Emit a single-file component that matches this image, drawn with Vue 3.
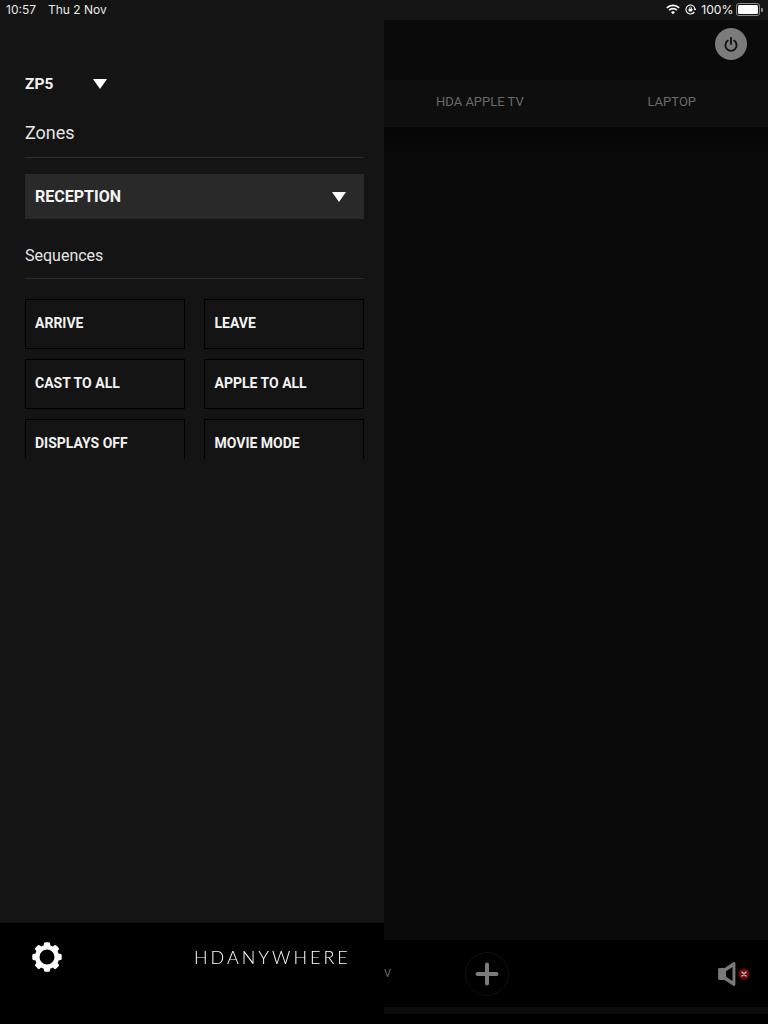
<script setup>
const sequences = ['ARRIVE', 'LEAVE', 'CAST TO ALL', 'APPLE TO ALL', 'DISPLAYS OFF', 'MOVIE MODE']
const teeth = [0, 45, 90, 135, 180, 225, 270, 315]
</script>

<template>
  <div class="page">
    <div class="status">
      <div class="status-left"><span>10:57</span><span>Thu 2 Nov</span></div>
      <div class="status-right">
        <svg class="wifi" width="14" height="11" viewBox="0 0 16 12">
          <path d="M1 4.200a10 10 0 0 1 14 0" fill="none" stroke="#fff" stroke-width="2"/>
          <path d="M3.600 6.800a6.300 6.300 0 0 1 8.800 0" fill="none" stroke="#fff" stroke-width="2"/>
          <path d="M8 11.400 5.700 9a3.300 3.300 0 0 1 4.600 0z" fill="#fff"/>
        </svg>
        <svg class="lock" width="11" height="11" viewBox="0 0 12 12">
          <path d="M10.200 8.600A4.900 4.900 0 1 1 10.900 6" fill="none" stroke="#fff" stroke-width="1.200"/>
          <path d="M9.300 5.200h3l-1.500 2z" fill="#fff"/>
          <rect x="4" y="5.200" width="4" height="3" rx=".4" fill="#fff"/>
          <path d="M4.900 5.400V4.400a1.100 1.100 0 0 1 2.200 0v1" fill="none" stroke="#fff" stroke-width=".8"/>
        </svg>
        <span class="pct">100%</span>
        <div class="battery"><div class="fill"></div></div>
        <div class="nub"></div>
      </div>
    </div>

    <div class="body">
      <aside class="drawer">
        <div class="drawer-main">
          <div class="device"><span>ZP5</span><i class="tri"></i></div>
          <div class="section zones">Zones</div>
          <div class="select"><span>RECEPTION</span><i class="tri"></i></div>
          <div class="section seq">Sequences</div>
          <div class="grid-clip">
            <div class="grid">
              <div v-for="s in sequences" :key="s" class="seq-btn">{{ s }}</div>
            </div>
          </div>
        </div>
        <div class="drawer-foot">
          <svg class="gear" width="30" height="30" viewBox="0 0 30 30">
            <rect v-for="a in teeth" :key="a" x="11.800" y="0.300" width="6.400" height="6" rx="1.600" fill="#fff" :transform="`rotate(${a} 15 15)`"/>
            <circle cx="15" cy="15" r="9.800" fill="none" stroke="#fff" stroke-width="4.600"/>
          </svg>
          <div class="logo">HDANYWHERE</div>
        </div>
      </aside>

      <main class="content">
        <div class="top">
          <div class="power">
            <svg width="14" height="15" viewBox="0 0 14 15">
              <path d="M3.800 3.600a5.600 5.600 0 1 0 6.400 0" fill="none" stroke="#111" stroke-width="1.800" stroke-linecap="round"/>
              <path d="M7 1v6" fill="none" stroke="#111" stroke-width="1.800" stroke-linecap="round"/>
            </svg>
          </div>
        </div>
        <div class="tabs">
          <span class="tab-a">HDA APPLE TV</span>
          <span class="tab-b">LAPTOP</span>
        </div>
        <div class="panel"></div>
        <div class="bottom">
          <span class="v">V</span>
          <div class="plus">
            <svg width="24" height="24" viewBox="0 0 24 24">
              <path d="M12 2.500v19M2.500 12h19" fill="none" stroke="#7b7b7b" stroke-width="4" stroke-linecap="round"/>
            </svg>
          </div>
          <div class="mute">
            <svg width="20" height="26" viewBox="0 0 20 26">
              <path d="M17 2.500 8 8.500H2.500v9H8l9 6z" fill="#7a7a7a" stroke="#7a7a7a" stroke-width="2.800" stroke-linejoin="round"/>
              <path d="M15.500 6 9 10.300V15.700L15.500 20z" fill="#000"/>
            </svg>
            <svg class="x" width="12" height="12" viewBox="0 0 12 12">
              <circle cx="6" cy="6" r="5.500" fill="#730808"/>
              <path d="M4 4l4 4M8 4l-4 4" stroke="#b9b9b9" stroke-width="1.500" stroke-linecap="round"/>
            </svg>
          </div>
        </div>
        <div class="strip"></div>
        <div class="end"></div>
      </main>
    </div>
  </div>
</template>

<style>
html, body { margin: 0; background: #000; }
</style>

<style scoped>
.page {
  width: 768px;
  height: 1024px;
  display: flex;
  flex-direction: column;
  overflow: hidden;
  background: #141414;
  font-family: Roboto, "Liberation Sans", sans-serif;
}
.status {
  height: 20px;
  flex: none;
  display: flex;
  justify-content: space-between;
  align-items: center;
  padding: 0 5.500px 1px 6px;
  box-sizing: border-box;
  font-family: Inter, Roboto, sans-serif;
  font-size: 12px;
  color: #e8e8e8;
}
.status-left { display: flex; gap: 12px; }
.status-right { display: flex; align-items: center; color: #f2f2f2; }
.wifi { margin-right: 5px; }
.lock { margin-right: 5px; }
.pct { font-size: 12.200px; margin-right: 2.500px; }
.battery {
  width: 20px;
  height: 9px;
  border: 1px solid #8a8a8a;
  border-radius: 3px;
  padding: 1px;
}
.fill { width: 100%; height: 100%; background: #fff; border-radius: 1.500px; }
.nub { width: 1.500px; height: 4px; background: #8a8a8a; margin-left: 1px; border-radius: 0 1px 1px 0; }

.body { flex: 1; display: flex; min-height: 0; }

.drawer {
  width: 384px;
  flex: none;
  display: flex;
  flex-direction: column;
  background: #141414;
}
.drawer-main { flex: 1; padding: 0 20px 0 25px; }
.device {
  display: flex;
  align-items: center;
  height: 20px;
  margin-top: 54px;
  font-size: 15.500px;
  font-weight: 700;
  color: #f2f2f2;
}
.device span { width: 67.500px; }
.tri {
  display: block;
  width: 0;
  height: 0;
  border-left: 7.500px solid transparent;
  border-right: 7.500px solid transparent;
  border-top: 10px solid #fff;
}
.section {
  color: #e6e6e6;
  border-bottom: 1px solid #2c2c2c;
  box-sizing: border-box;
}
.zones {
  height: 64px;
  padding-top: 28px;
  margin-bottom: 16px;
  font-size: 18px;
  line-height: 22px;
}
.select {
  height: 45px;
  background: #292929;
  display: flex;
  align-items: center;
  justify-content: space-between;
  padding: 0 18px 0 10px;
  font-size: 16px;
  font-weight: 700;
  color: #f4f4f4;
}
.seq {
  height: 60px;
  padding-top: 26.500px;
  font-size: 16px;
  line-height: 20px;
  margin-bottom: 20px;
}
.grid-clip { height: 160px; overflow: hidden; }
.grid {
  display: grid;
  grid-template-columns: 160px 160px;
  column-gap: 19px;
  row-gap: 10px;
}
.seq-btn {
  height: 50px;
  box-sizing: border-box;
  border: 1px solid #000;
  padding: 13px 9px 0;
  font-size: 14px;
  line-height: 20px;
  font-weight: 700;
  color: #f2f2f2;
}
.seq-btn:nth-child(even) { padding-left: 9.500px; }
.drawer-foot {
  height: 101px;
  flex: none;
  background: #000;
  display: flex;
  align-items: flex-start;
  justify-content: space-between;
  padding: 19px 36px 0 32px;
  box-sizing: border-box;
}
.logo {
  font-family: Lato, "Open Sans", sans-serif;
  font-weight: 300;
  font-size: 18px;
  line-height: 30px;
  letter-spacing: 3px;
  color: #fff;
  margin-right: -3px;
  will-change: transform;
}

.content {
  flex: 1;
  display: flex;
  flex-direction: column;
  min-width: 0;
  background: #050505;
}
.top {
  height: 60px;
  flex: none;
  background: #0a0a0a;
  display: flex;
  justify-content: flex-end;
  padding: 8px 21px 0 0;
  box-sizing: border-box;
}
.power {
  width: 32px;
  height: 32px;
  border-radius: 50%;
  background: #7b7b7b;
  display: flex;
  align-items: center;
  justify-content: center;
}
.tabs {
  height: 47px;
  flex: none;
  background: #0e0e0e;
  font-size: 13px;
  color: #6a6a6a;
  display: flex;
  align-items: center;
  padding-bottom: 4px;
  box-sizing: border-box;
}
.tab-a { margin-left: 52px; width: 211.500px; }
.panel { flex: 1; min-height: 0; background: linear-gradient(#060606, #0a0a0a 40px); }
.bottom {
  height: 67px;
  flex: none;
  background: #000;
  display: flex;
  align-items: center;
}
.v { width: 81px; font-size: 11px; color: #6c6c6c; }
.plus {
  width: 42px;
  height: 42px;
  border-radius: 50%;
  border: 1px solid #111;
  display: flex;
  align-items: center;
  justify-content: center;
}
.mute { margin-left: auto; margin-right: 18px; display: flex; align-items: center; }
.x { margin-left: 1px; }
.strip { height: 7px; flex: none; background: #0b0b0b; }
.end { height: 10px; flex: none; background: #000; }
</style>
